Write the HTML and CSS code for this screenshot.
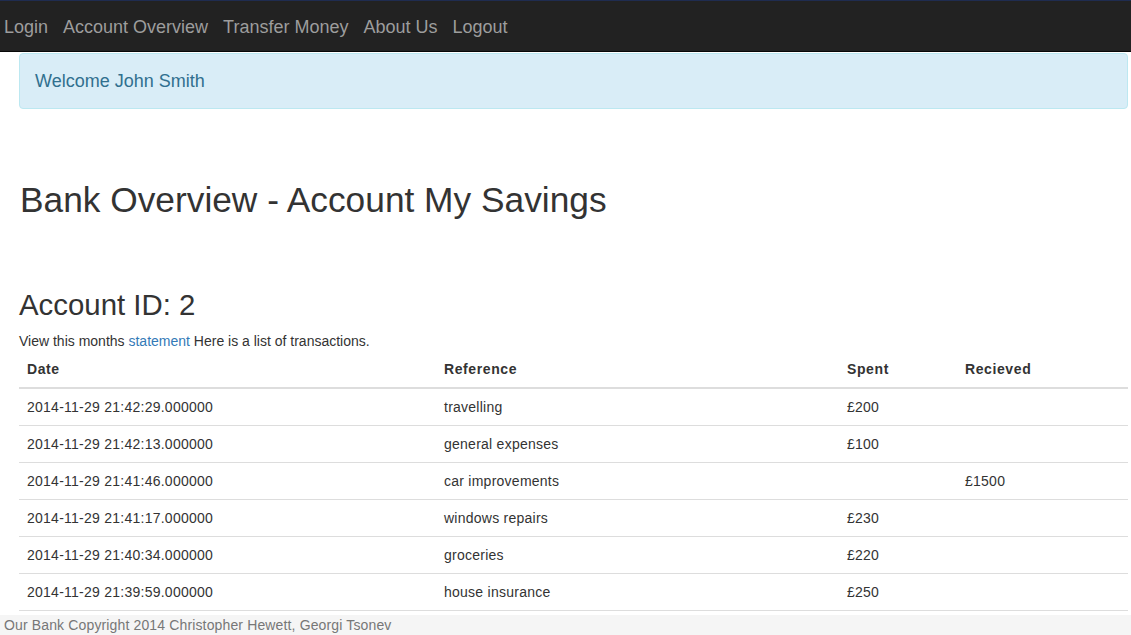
FILE: index.html
```html
<!DOCTYPE html>
<html>
<head>
<meta charset="utf-8">
<title>Our Bank</title>
<link rel="stylesheet" href="styles.css">
</head>
<body>
<nav class="navbar">
  <ul class="nav">
    <li><a href="#">Login</a></li>
    <li><a href="#">Account Overview</a></li>
    <li><a href="#">Transfer Money</a></li>
    <li><a href="#">About Us</a></li>
    <li><a href="#">Logout</a></li>
  </ul>
</nav>
<main class="container">
  <div class="alert">Welcome John Smith</div>
  <h1 class="title">Bank Overview - Account My Savings</h1>
  <h2 class="subtitle">Account ID: 2</h2>
  <p class="intro">View this months <a href="#">statement</a> Here is a list of transactions.</p>
  <table class="table">
    <colgroup>
      <col class="c-date">
      <col class="c-ref">
      <col class="c-spent">
      <col class="c-recv">
    </colgroup>
    <thead>
      <tr><th>Date</th><th>Reference</th><th>Spent</th><th>Recieved</th></tr>
    </thead>
    <tbody>
      <tr><td>2014-11-29 21:42:29.000000</td><td>travelling</td><td>£200</td><td></td></tr>
      <tr><td>2014-11-29 21:42:13.000000</td><td>general expenses</td><td>£100</td><td></td></tr>
      <tr><td>2014-11-29 21:41:46.000000</td><td>car improvements</td><td></td><td>£1500</td></tr>
      <tr><td>2014-11-29 21:41:17.000000</td><td>windows repairs</td><td>£230</td><td></td></tr>
      <tr><td>2014-11-29 21:40:34.000000</td><td>groceries</td><td>£220</td><td></td></tr>
      <tr><td>2014-11-29 21:39:59.000000</td><td>house insurance</td><td>£250</td><td></td></tr>
    </tbody>
  </table>
</main>
<footer class="footer">Our Bank Copyright 2014 Christopher Hewett, Georgi Tsonev</footer>
</body>
</html>
```
FILE: styles.css
```css
html, body {
  margin: 0;
  padding: 0;
}
body {
  font-family: "Liberation Sans", Arial, sans-serif;
  font-size: 14px;
  line-height: 20px;
  color: #333;
  background: #fff;
}
a {
  color: #337ab7;
  text-decoration: none;
}
.navbar {
  height: 49px;
  padding-top: 1px;
  background: #222;
  border-top: 1px solid #1f2c50;
  border-bottom: 1px solid #080808;
  display: flex;
  align-items: center;
}
.nav {
  list-style: none;
  margin: 0;
  padding: 0 0 0 4px;
  display: flex;
  gap: 15px;
}
.nav a {
  color: #9d9d9d;
  font-size: 18px;
  line-height: 24px;
}
.container {
  margin: 0 3px 0 19px;
  padding-bottom: 40px;
}
.alert {
  margin-top: 1px;
  padding: 15px;
  background: #d9edf7;
  border: 1px solid #bce8f1;
  border-radius: 4px;
  color: #31708f;
  font-size: 18px;
  line-height: 24px;
}
.title {
  margin: 71px 0 0 1px;
  font-size: 35.3px;
  font-weight: normal;
  line-height: 40px;
}
.subtitle {
  margin: 68px 0 0 0;
  font-size: 29.4px;
  font-weight: normal;
  line-height: 33px;
}
.intro {
  margin: 10px 0 0 0;
  font-size: 14px;
  line-height: 20px;
}
.table {
  width: 100%;
  border-collapse: collapse;
  table-layout: fixed;
}
.c-date { width: 417px; }
.c-ref { width: 403px; }
.c-spent { width: 118px; }
.table th {
  text-align: left;
  font-weight: bold;
  letter-spacing: 0.6px;
  padding: 8px;
  border-bottom: 2px solid #ddd;
}
.table td {
  padding: 8px;
  letter-spacing: 0.25px;
  border-bottom: 1px solid #ddd;
}
.footer {
  position: fixed;
  left: 0;
  right: 0;
  bottom: 0;
  height: 20px;
  padding-left: 4px;
  background: #f5f5f5;
  color: #777;
  font-size: 14px;
  line-height: 20px;
  letter-spacing: 0.14px;
}
```
